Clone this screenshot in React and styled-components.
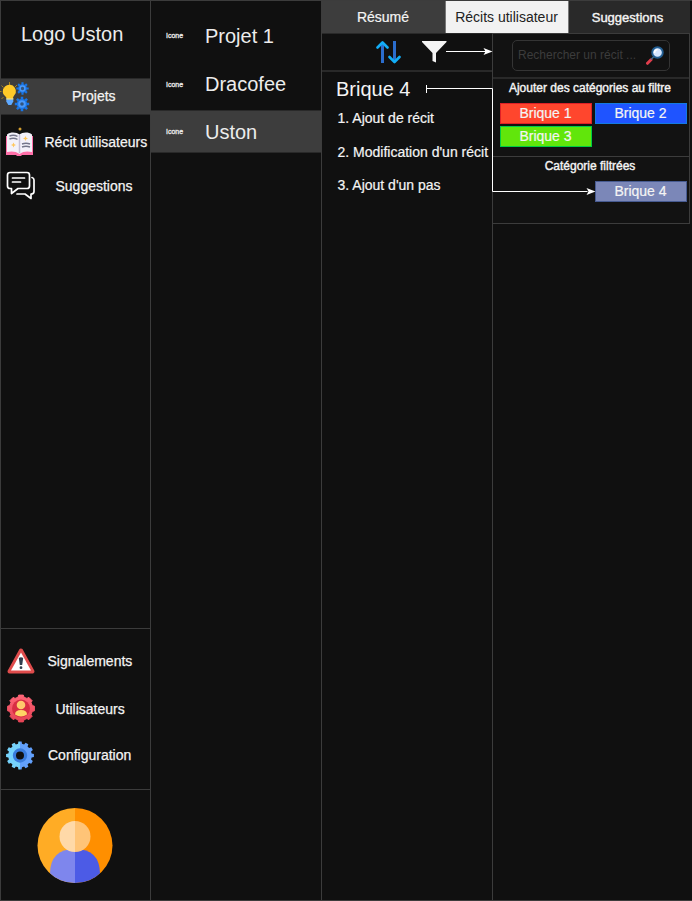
import React from "react";
import styled, { createGlobalStyle, css } from "styled-components";

const line = "#3c3c3c";
const ink = "#101010";

const Global = createGlobalStyle`
  * { box-sizing: border-box; }
  body { margin: 0; background: ${ink}; }
`;

const Window = styled.div`
  position: relative;
  display: grid;
  grid-template-columns: 151px 171px 370px;
  width: 692px;
  height: 901px;
  overflow: hidden;
  background: ${ink};
  border-top: 1px solid ${line};
  border-bottom: 1px solid ${line};
  color: #f4f4f4;
  font: 14px "Liberation Sans", Arial, sans-serif;
`;

const Sidebar = styled.nav`
  display: flex;
  flex-direction: column;
  border-left: 1px solid ${line};
  border-right: 1px solid ${line};
`;

const Logo = styled.div`
  height: 77px;
  padding: 21px 0 0 20px;
  font-size: 20px;
  line-height: 24px;
  color: #ececec;
`;

const NavItem = styled.a`
  display: grid;
  grid-template-columns: 38px 1fr;
  align-items: center;
  height: ${(p) => p.$height}px;
  white-space: nowrap;
  -webkit-text-stroke: 0.25px #f4f4f4;
  ${(p) =>
    p.$active &&
    css`
      background: #3d3d3d;
      border-top: 1px solid #292929;
      border-bottom: 1px solid #292929;
    `}
  svg { display: block; margin-left: ${(p) => p.$inset ?? 5}px; }
  span { padding: 0 0 ${(p) => p.$lift || 0}px ${(p) => p.$text}px; }
`;

const AdminLinks = styled.div`
  margin-top: auto;
  height: 161px;
  padding-top: 8px;
  border-top: 1px solid ${line};
`;

const Account = styled.div`
  display: flex;
  height: 111px;
  padding: 18px 0 0 36px;
  border-top: 1px solid ${line};
`;

const Projects = styled.div`
  border-right: 1px solid ${line};
  padding-top: 13px;
`;

const Project = styled.div`
  display: grid;
  grid-template-columns: 54px 1fr;
  align-items: center;
  height: ${(p) => p.$height}px;
  font-size: 20px;
  color: #ececec;
  ${(p) =>
    p.$active &&
    css`
      padding-top: 1px;
      background: #3d3d3d;
      border-top: 1px solid #292929;
      border-bottom: 1px solid #292929;
    `}
  small {
    padding: ${(p) => p.$drop || 0}px 0 0 15px;
    font-size: 7px;
    line-height: 8px;
    -webkit-text-stroke: 0.3px #ececec;
  }
`;

const Workspace = styled.main`
  display: flex;
  flex-direction: column;
`;

const Tabs = styled.div`
  display: grid;
  grid-template-columns: 123px 124px 121px;
  height: 32px;
`;

const Tab = styled.div`
  display: flex;
  align-items: center;
  justify-content: center;
  white-space: nowrap;
  background: ${(p) => p.$bg};
  color: ${(p) => p.$color || "#f4f4f4"};
  border: solid #777;
  border-width: ${(p) => (p.$selected ? "0 1px" : "0")};
  font-size: ${(p) => (p.$strong ? 13 : 14)}px;
  padding-right: ${(p) => (p.$strong ? 4 : 1)}px;
  -webkit-text-stroke: ${(p) => (p.$strong ? 0.4 : p.$selected ? 0 : 0.2)}px currentColor;
`;

const Body = styled.div`
  display: grid;
  grid-template-columns: 170px 198px;
  flex: 1;
`;

const Stories = styled.section`
  min-width: 0;
`;

const Toolbar = styled.div`
  display: flex;
  height: 39px;
  padding: 7px 0 0 54px;
  gap: 20px;
  border-top: 1px solid #292929;
  border-bottom: 2px solid #292929;
`;

const StoryTitle = styled.h2`
  margin: 0;
  padding: 4px 0 0 14px;
  font-size: 20px;
  font-weight: 400;
  line-height: 27px;
`;

const StoryList = styled.ol`
  margin: 0;
  padding: 6px 0 0 15.5px;
  list-style: none;
  white-space: nowrap;
  -webkit-text-stroke: 0.2px #f4f4f4;
`;

const Story = styled.li`
  height: 33.5px;
  line-height: 18px;
`;

const RightColumn = styled.div`
  border-left: 1px solid ${line};
`;

const Filters = styled.aside`
  height: 191px;
  border: solid ${line};
  border-width: 1px 1px 1px 0;
  background: #121212;
`;

const SearchArea = styled.div`
  height: 45px;
  padding: 6px 19px 0 19px;
  border-bottom: 2px solid #292929;
`;

const Search = styled.label`
  display: flex;
  align-items: center;
  justify-content: space-between;
  height: 31px;
  padding: 0 5px;
  border: 1px solid #343434;
  border-radius: 5px;
  color: #3c3c3c;
  font-size: 12px;
  white-space: nowrap;
  span { padding-bottom: 2px; }
`;

const FilterGroup = styled.div`
  height: ${(p) => p.$height}px;
  border-bottom: ${(p) => (p.$last ? "0" : `1px solid ${line}`)};
`;

const GroupTitle = styled.div`
  height: 24px;
  padding-right: 2px;
  line-height: 19px;
  font-size: 12px;
  text-align: center;
  -webkit-text-stroke: 0.4px currentColor;
  white-space: nowrap;
`;

const Chips = styled.div`
  display: grid;
  grid-template-columns: 92px 92px;
  gap: 2px 3px;
  padding-left: 7px;
`;

const Chip = styled.div`
  grid-column: ${(p) => p.$column || "auto"};
  height: 21px;
  border: 1px solid ${(p) => p.$border};
  background: ${(p) => p.$bg};
  text-align: center;
  line-height: 19px;
  padding-right: 1px;
  -webkit-text-stroke: 0.2px currentColor;
`;

const Connectors = styled.svg`
  position: absolute;
  left: 420px;
  top: 39px;
  pointer-events: none;
`;

const teeth = (count, cx, cy, inner, outer) => {
  const points = [];
  for (let i = 0; i < count; i++) {
    const step = (Math.PI * 2) / count;
    const a = i * step - Math.PI / 2;
    [[-0.32, inner], [-0.22, outer], [0.22, outer], [0.32, inner]].forEach(([k, r]) =>
      points.push(`${(cx + r * Math.cos(a + k * step)).toFixed(2)},${(cy + r * Math.sin(a + k * step)).toFixed(2)}`)
    );
  }
  return points.join(" ");
};

const IdeaIcon = () => (
  <svg width="30" height="32" viewBox="0 0 30 32">
    <path d="M9.500 1v3M1.500 4.500l2 2M17 4l-2 2M-1 10.500h2.500M1.500 18l2-2" stroke="#a98420" />
    <path d="M2.800 10.500a6.600 6.600 0 1 1 13 1.500c-1 2-2.500 3-2.800 5H6.500C5.500 14.500 2.800 14 2.800 10.500z" fill="#ffc928" />
    <path d="M6.300 17.500h7v3l-2 3.500h-3l-2-3.500z" fill="#5fa9ff" />
    <path d="M6.300 17.800h7" stroke="#f6dc76" strokeWidth="1.500" />
    <polygon points={teeth(8, 22.5, 7.5, 4.4, 6.3)} fill="#1975e5" />
    <circle cx="22.500" cy="7.500" r="2.400" fill="#32547e" stroke="#4999fb" strokeWidth="1.500" />
    <polygon points={teeth(8, 22, 23, 5.2, 7.3)} fill="#1975e5" />
    <circle cx="22" cy="23" r="2.800" fill="#32547e" stroke="#4999fb" strokeWidth="2" />
  </svg>
);

const BookIcon = () => (
  <svg width="29" height="30" viewBox="0 0 29 30">
    <path d="M1 9h27v19h-11l-1 1h-4l-1-1H1z" fill="#ff70a9" />
    <path d="M2 7.500c4-3 10-2 12.500 0C17 5.500 23 4.500 27 7.500V25c-4-1-9-1-12.500 2C11 24 6 24 2 25z" fill="#f3f1fa" />
    <path d="M14.500 8v18" stroke="#c4bfd6" strokeWidth="1.500" />
    <path d="M4.500 9q4-1.500 8 .3M4.500 12q4-1.500 8 .3M17 17q4-1.500 8 0M17 20q4-1.500 8 0" fill="none" stroke="#74758a" strokeWidth="1.400" />
    <path d="M8.500 15.500l.8 1.700 1.700.8-1.700.8-.8 1.700-.8-1.700L6 18l1.700-.8zM20.500 9l.8 1.700 1.700.8-1.700.8-.8 1.700-.8-1.700-1.700-.8 1.700-.8z" fill="#ffc75c" />
    <circle cx="15" cy="2" r="1.500" fill="#d29d2e" />
  </svg>
);

const ChatIcon = () => (
  <svg width="31" height="30" viewBox="0 0 31 30" fill="none" stroke="#fff" strokeWidth="1.700" strokeLinejoin="round" strokeLinecap="round">
    <path d="M4 1.500h17q2.500 0 2.500 2.500v11q0 2.500-2.500 2.500h-9l-6.500 5v-5H4q-2.500 0-2.500-2.500V4Q1.500 1.500 4 1.500zM6.500 7h12M6.500 11h8" />
    <path d="M26 6.500q2 .5 2 2.500v11.500q0 2.500-3 2.500v4.500l-6-4.500h-8" />
  </svg>
);

const WarningIcon = () => (
  <svg width="30" height="28" viewBox="0 0 30 28">
    <path d="M15 3.500L26.500 24.500h-23z" fill="#fff" stroke="#df4c4c" strokeWidth="4" strokeLinejoin="round" />
    <path d="M15 5.500L25 23.500H5z" fill="#fff" />
    <path d="M12.800 11q2.200-1.500 4.400 0l-1 7h-2.400z" fill="#303d4c" />
    <circle cx="15" cy="20.700" r="1.400" fill="#303d4c" />
  </svg>
);

const UserGearIcon = () => (
  <svg width="30" height="30" viewBox="0 0 30 30">
    <defs>
      <linearGradient id="user-gear" x2="0" y2="1">
        <stop stopColor="#ff6577" />
        <stop offset="1" stopColor="#e64355" />
      </linearGradient>
    </defs>
    <polygon points={teeth(8, 15, 14.5, 11.7, 13.6)} fill="url(#user-gear)" stroke="url(#user-gear)" strokeLinejoin="round" />
    <circle cx="15" cy="14.500" r="9" fill="#d82d43" />
    <circle cx="15" cy="11" r="4.300" fill="#ffc96c" />
    <path d="M9 20.500q0-4.500 6-4.500t6 4.500q-6 4-12 0z" fill="#ffd565" />
  </svg>
);

const GearIcon = () => (
  <svg width="30" height="30" viewBox="0 0 30 30">
    <defs>
      <linearGradient id="gear">
        <stop offset="0.500" stopColor="#76d3fc" />
        <stop offset="0.500" stopColor="#62a0fc" />
      </linearGradient>
    </defs>
    <polygon points={teeth(12, 14, 14.5, 11.8, 14)} fill="url(#gear)" />
    <circle cx="14" cy="14.500" r="5.600" fill={ink} stroke="#397cdd" strokeWidth="3.200" />
  </svg>
);

const Avatar = () => (
  <svg width="76" height="76" viewBox="0 0 76 76">
    <defs>
      <clipPath id="avatar-disc"><circle cx="38" cy="37.500" r="37.500" /></clipPath>
    </defs>
    <g clipPath="url(#avatar-disc)">
      <path d="M0 0h38v76H0z" fill="#ffac25" />
      <path d="M38 0h38v76H38z" fill="#ff8f00" />
      <path d="M13 76V66q0-25 25-25v35z" fill="#7e86ed" />
      <path d="M38 41q25 0 25 25v10H38z" fill="#4c5be6" />
      <path d="M38 13a15.500 15.500 0 0 0 0 31z" fill="#ffd9a8" />
      <path d="M38 13a15.500 15.500 0 0 1 0 31z" fill="#ffc477" />
    </g>
  </svg>
);

const SortIcon = () => (
  <svg width="25" height="23" viewBox="0 0 25 23" fill="none" strokeWidth="3">
    <path d="M6.500 2v20M18.500 0v20" stroke="#2b6dcd" />
    <path d="M1.500 6.500l5-5 5 5M13.500 16l5 5 5-5" stroke="#12adf6" strokeWidth="2.600" strokeLinecap="round" strokeLinejoin="round" />
  </svg>
);

const FunnelIcon = () => (
  <svg width="26" height="23" viewBox="0 0 26 23">
    <path d="M1 0h24.500v1L15 12v9.500l-3.500-1.500v-8L1 1z" fill="#f4f4f4" />
  </svg>
);

const SearchIcon = () => (
  <svg width="18" height="19" viewBox="0 0 18 19">
    <path d="M1.500 17.300l3.500-3.500" stroke="#df3d4c" strokeWidth="3" strokeLinecap="round" />
    <path d="M5 13.500l3-3" stroke="#416c8b" strokeWidth="1.500" />
    <circle cx="11.500" cy="6.500" r="5.300" fill="#d5e6ff" stroke="#225d91" strokeWidth="1.900" />
    <path d="M8.500 7a3.500 3.500 0 0 1 3-3.500" fill="none" stroke="#fff" strokeWidth="1.500" />
  </svg>
);

export default function App() {
  return (
    <>
      <Global />
      <Window>
        <Sidebar>
          <Logo>Logo Uston</Logo>
          <NavItem $active $height={37} $text={33} $inset={-1} $lift={2}><IdeaIcon /><span>Projets</span></NavItem>
          <NavItem $height={54} $text={5.5} $inset={4}><BookIcon /><span>Récit utilisateurs</span></NavItem>
          <NavItem $height={34} $text={16.5}><ChatIcon /><span>Suggestions</span></NavItem>
          <AdminLinks>
            <NavItem $height={48} $text={8.5}><WarningIcon /><span>Signalements</span></NavItem>
            <NavItem $height={47} $text={16.5}><UserGearIcon /><span>Utilisateurs</span></NavItem>
            <NavItem $height={47} $text={9} $lift={2}><GearIcon /><span>Configuration</span></NavItem>
          </AdminLinks>
          <Account><Avatar /></Account>
        </Sidebar>
        <Projects>
          <Project $height={44}><small>Icone</small>Projet 1</Project>
          <Project $height={52} $drop={2}><small>Icone</small>Dracofee</Project>
          <Project $active $height={43}><small>Icone</small>Uston</Project>
        </Projects>
        <Workspace>
          <Tabs>
            <Tab $bg="#3d3d3d">Résumé</Tab>
            <Tab $bg="#f2f2f2" $color="#222" $selected>Récits utilisateur</Tab>
            <Tab $bg="#292929" $strong>Suggestions</Tab>
          </Tabs>
          <Body>
            <Stories>
              <Toolbar><SortIcon /><FunnelIcon /></Toolbar>
              <StoryTitle>Brique 4</StoryTitle>
              <StoryList>
                <Story>1. Ajout de récit</Story>
                <Story>2. Modification d'un récit</Story>
                <Story>3. Ajout d'un pas</Story>
              </StoryList>
            </Stories>
            <RightColumn>
              <Filters>
                <SearchArea><Search><span>Rechercher un récit ...</span><SearchIcon /></Search></SearchArea>
                <FilterGroup $height={78}>
                  <GroupTitle>Ajouter des catégories au filtre</GroupTitle>
                  <Chips>
                    <Chip $bg="#ff462d" $border="#df2026">Brique 1</Chip>
                    <Chip $bg="#1f54ff" $border="#147ae1">Brique 2</Chip>
                    <Chip $bg="#61e60b" $border="#00cc44">Brique 3</Chip>
                  </Chips>
                </FilterGroup>
                <FilterGroup $height={65} $last>
                  <GroupTitle>Catégorie filtrées</GroupTitle>
                  <Chips><Chip $column={2} $bg="#7b87b8" $border="#475b91">Brique 4</Chip></Chips>
                </FilterGroup>
              </Filters>
            </RightColumn>
          </Body>
        </Workspace>
        <Connectors width="180" height="160" fill="none" stroke="#fff">
          <path d="M26 11.500h40M6.500 45v8M6.500 48.500h66v103h95" />
          <path d="M72.500 11.500l-9-3.500 2 3.500-2 3.500zM175.500 151.500l-9-3.500 2 3.500-2 3.500z" fill="#fff" stroke="none" />
        </Connectors>
      </Window>
    </>
  );
}
